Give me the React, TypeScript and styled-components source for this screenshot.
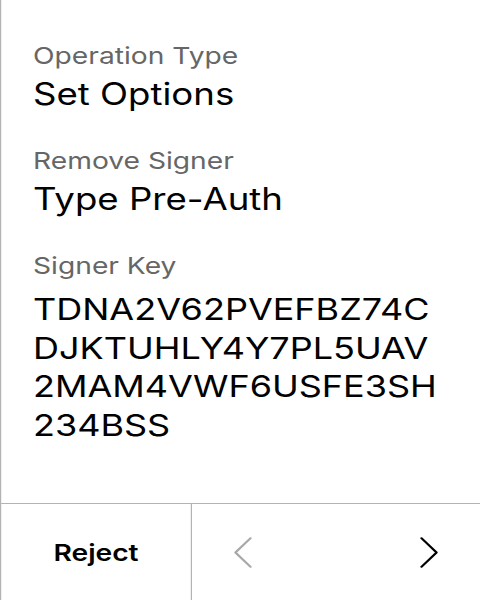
import styled, { createGlobalStyle } from 'styled-components';

const GlobalStyle = createGlobalStyle`
  html, body {
    margin: 0;
    padding: 0;
    background: #ffffff;
    overflow: hidden;
  }
  body {
    font-family: Inter, "Noto Sans", "Liberation Sans", sans-serif;
    color: #000000;
  }
`;

const Screen = styled.div`
  width: 400px;
  height: 600px;
  box-sizing: border-box;
  border-left: 1px solid #b3b3b3;
  display: flex;
  flex-direction: column;
  background: #ffffff;
  transform: scaleX(1.2);
  transform-origin: left top;
`;

const Content = styled.div`
  flex: 1;
  padding: 41px 28px 0 26.5px;
  display: flex;
  flex-direction: column;
  gap: 34px;
`;

const Field = styled.div`
  display: flex;
  flex-direction: column;
  gap: 6px;
`;

const Label = styled.div`
  font-size: 23.5px;
  line-height: 29px;
  color: #666666;
`;

const Value = styled.div<{ $key?: boolean }>`
  font-size: ${(p) => (p.$key ? '30px' : '30.5px')};
  line-height: ${(p) => (p.$key ? '38.5px' : '36px')};
  margin-top: ${(p) => (p.$key ? '4px' : '0')};
  color: #000000;
  word-break: break-all;
`;

const Footer = styled.div`
  height: 96px;
  border-top: 1px solid #b3b3b3;
  display: grid;
  grid-template-columns: 159px 1fr;
`;

const RejectButton = styled.button`
  border: none;
  border-right: 1px solid #b3b3b3;
  background: transparent;
  font-family: inherit;
  font-size: 23.5px;
  font-weight: 600;
  color: #000000;
  padding: 0;
  cursor: pointer;
`;

const Nav = styled.div`
  display: flex;
  align-items: center;
  justify-content: space-between;
  padding: 0 35px 0 35px;
`;

const Chevron = styled.button<{ $disabled?: boolean }>`
  border: none;
  background: transparent;
  padding: 0;
  display: flex;
  color: ${(p) => (p.$disabled ? '#a8a8a8' : '#000000')};
  cursor: ${(p) => (p.$disabled ? 'default' : 'pointer')};
`;

const ChevronIcon = ({ dir }: { dir: 'left' | 'right' }) => (
  <svg width="15" height="31" viewBox="0 0 15 31" fill="none">
    <polyline
      points={dir === 'left' ? '13.8,1.2 1.2,15.5 13.8,29.8' : '1.2,1.2 13.8,15.5 1.2,29.8'}
      stroke="currentColor"
      strokeWidth="1.9"
      strokeLinecap="round"
      strokeLinejoin="round"
    />
  </svg>
);

const fields = [
  { label: 'Operation Type', value: 'Set Options' },
  { label: 'Remove Signer', value: 'Type Pre-Auth' },
];

const signerKey = 'TDNA2V62PVEFBZ74CDJKTUHLY4Y7PL5UAV2MAM4VWF6USFE3SH234BSS';

const App = () => {
  return (
    <>
      <GlobalStyle />
      <Screen>
        <Content>
          {fields.map((f) => (
            <Field key={f.label}>
              <Label>{f.label}</Label>
              <Value>{f.value}</Value>
            </Field>
          ))}
          <Field>
            <Label>Signer Key</Label>
            <Value $key>{signerKey}</Value>
          </Field>
        </Content>
        <Footer>
          <RejectButton>Reject</RejectButton>
          <Nav>
            <Chevron $disabled>
              <ChevronIcon dir="left" />
            </Chevron>
            <Chevron>
              <ChevronIcon dir="right" />
            </Chevron>
          </Nav>
        </Footer>
      </Screen>
    </>
  );
};

export default App;
